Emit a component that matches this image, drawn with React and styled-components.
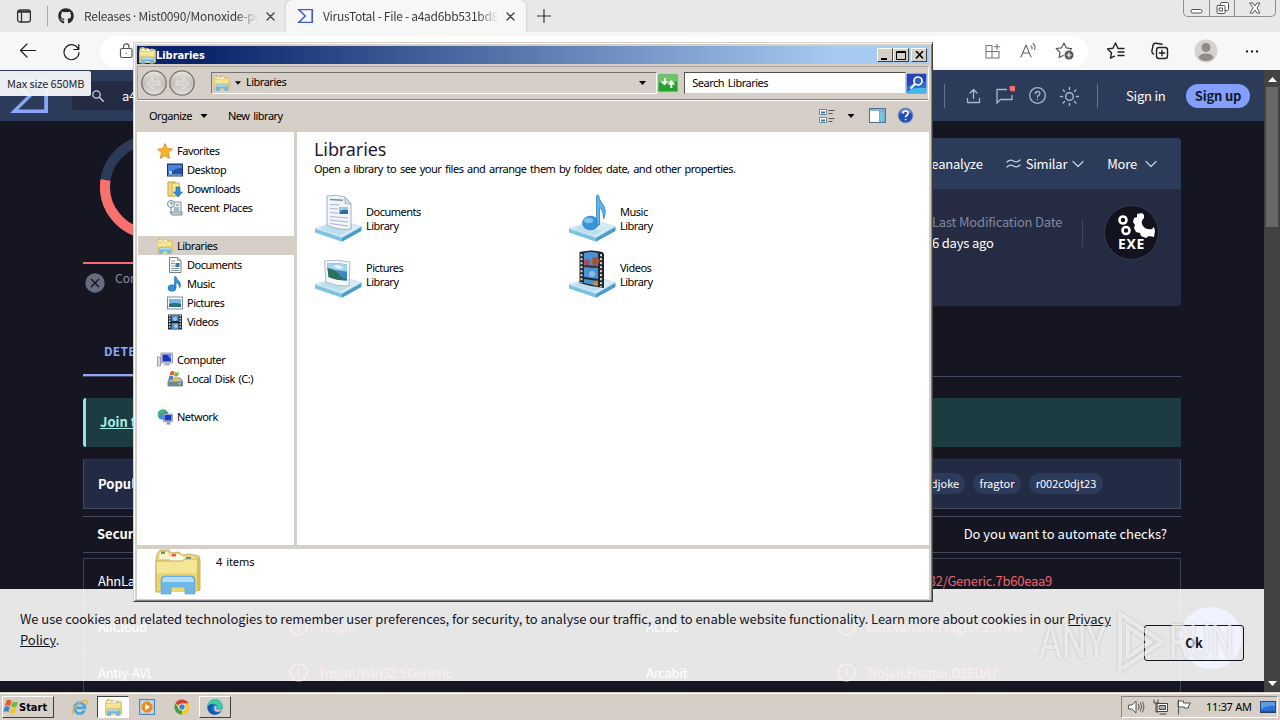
import React from "react";
import styled, { createGlobalStyle, css } from "styled-components";
import { FaGithub } from "react-icons/fa";

const GlobalStyle = createGlobalStyle`
  * {
    box-sizing: border-box;
  }
  body {
    margin: 0;
    overflow: hidden;
    background: #161622;
  }
  svg {
    display: block;
    flex: none;
  }
`;

const pageFont = `"Noto Sans CJK SC", "Noto Sans", sans-serif`;
const winFont = `"Noto Sans", "DejaVu Sans", sans-serif`;
const winBold = `"DejaVu Sans Condensed", "DejaVu Sans", sans-serif`;

const Spacer = styled.div`
  width: ${(p) => p.$w}px;
  flex: none;
`;

/* ---------- desktop ---------- */

const Desktop = styled.div`
  position: relative;
  width: 1280px;
  height: 720px;
  display: flex;
  flex-direction: column;
  overflow: hidden;
  font-family: ${pageFont};
  white-space: nowrap;
`;

/* ---------- browser ---------- */

const TabStrip = styled.div`
  height: 32px;
  flex: none;
  display: flex;
  background: #e8e8e8;
  padding-left: 16px;
`;

const StripIcon = styled.div`
  width: 32px;
  display: flex;
  align-items: center;
  border-right: 1px solid #aaa;
  height: 20px;
  margin-top: 6px;
`;

const Tab = styled.div`
  display: flex;
  align-items: center;
  width: ${(p) => p.$width}px;
  padding: 0 11px 0 ${(p) => (p.$active ? 11 : 10)}px;
  background: ${(p) => (p.$active ? "#f7f7f7" : "transparent")};
  border-radius: 6px 6px 0 0;
  box-shadow: ${(p) => (p.$active ? "0 0 2px rgba(0,0,0,.25)" : "none")};
`;

const TabTitle = styled.span`
  flex: 1;
  margin: 0 8px 0 10px;
  overflow: hidden;
  font-size: 12px;
  line-height: 18px;
  letter-spacing: ${(p) => p.$ls}px;
  color: #3c3c3c;
  -webkit-mask-image: linear-gradient(90deg, #000 88%, transparent);
  mask-image: linear-gradient(90deg, #000 88%, transparent);
`;

/* the CJK face draws the middle dot full width */
const Dot = styled.span`
  font-family: "Noto Sans", sans-serif;
  line-height: 1;
`;

const NewTab = styled.div`
  display: flex;
  align-items: center;
  margin-left: 11px;
`;

const Caption = styled.div`
  display: flex;
  height: 17px;
  margin: 0 4px 0 auto;
  border: 1px solid #8e8e8e;
  border-top: 0;
  border-radius: 0 0 5px 5px;
`;

const CaptionButton = styled.div`
  width: ${(p) => p.$width}px;
  display: flex;
  align-items: center;
  justify-content: center;
  & + & {
    border-left: 1px solid #8e8e8e;
  }
`;

const Toolbar = styled.div`
  height: 38px;
  flex: none;
  display: flex;
  align-items: center;
  background: #f7f7f7;
  padding-left: 18px;
`;

const Omnibox = styled.div`
  width: 988px;
  height: 31px;
  margin: 0 18px 0 19px;
  padding: 0 12px 0 18px;
  display: flex;
  align-items: center;
  border-radius: 16px;
  background: #fff;
`;

const OmniActions = styled.div`
  display: flex;
  margin-left: auto;
  gap: 16px;
`;

const ToolIcons = styled.div`
  display: flex;
  align-items: center;
  gap: 24px;
`;

const Viewport = styled.div`
  flex: 1;
  min-height: 0;
  display: flex;
`;

const Page = styled.div`
  flex: 1;
  background: #161622;
  color: #fff;
  overflow: hidden;
`;

const ScrollTrack = styled.div`
  width: 16px;
  background: #424242;
  display: flex;
  flex-direction: column;
  align-items: center;
  justify-content: space-between;
  padding: 7px 0 6px;
`;

const ScrollThumb = styled.div`
  width: 12px;
  height: 140px;
  margin: 5px 0 auto;
  background: #686868;
`;

const SiteHeader = styled.header`
  height: 51px;
  padding: 0 14px 0 10px;
  display: flex;
  align-items: center;
  background: #2d3b5b;
`;

const SearchField = styled.div`
  width: 700px;
  height: 29px;
  margin: 0 auto 0 24px;
  padding-left: 19px;
  display: flex;
  align-items: center;
  gap: 17px;
  border-radius: 3px;
  background: #242c43;
  font-size: 13px;
`;

const HeaderRule = styled.div`
  width: 1px;
  height: ${(p) => p.$height || 24}px;
  background: ${(p) => p.$color || "#66718e"};
  margin: 0 ${(p) => p.$right}px 0 ${(p) => p.$left}px;
`;

const HeaderIcons = styled.div`
  display: flex;
  gap: 13px;
`;

const SignIn = styled.span`
  width: 39px;
  font-size: 13px;
  letter-spacing: -0.2px;
`;

const SignUp = styled.span`
  width: 64px;
  height: 24px;
  margin-left: 21px;
  line-height: 24px;
  border-radius: 12px;
  background: #839ffb;
  color: #14182c;
  font-size: 13px;
  font-weight: 700;
  letter-spacing: -0.2px;
  text-align: center;
`;

const Content = styled.main`
  width: 1098px;
  margin-left: 83px;
`;

const Summary = styled.div`
  display: flex;
  gap: 12px;
  height: 185px;
  padding-top: 17px;
`;

const ScoreCard = styled.div`
  width: 170px;
  display: flex;
  flex-direction: column;
  padding-left: 17px;
`;

const ScoreFoot = styled.div`
  display: flex;
  align-items: flex-start;
  gap: 10px;
  margin: 20px 0 0 -17px;
  padding: 5px 0 0 2px;
  border-top: 2px solid #f46c75;
  font-size: 12px;
  color: #8b93a9;
  svg {
    margin-top: 4px;
  }
`;

const FileCard = styled.div`
  flex: 1;
  height: 168px;
  border-radius: 4px;
  overflow: hidden;
  background: #242b42;
`;

const FileActions = styled.div`
  height: 51px;
  background: #2d3b5b;
  display: flex;
  align-items: center;
  justify-content: flex-end;
  padding-right: 24px;
  font-size: 13px;
  letter-spacing: -0.2px;
`;

const FileAction = styled.div`
  display: flex;
  align-items: center;
  gap: ${(p) => p.$gap}px;
  margin-left: ${(p) => p.$left}px;
`;

const FileMeta = styled.div`
  display: flex;
  justify-content: flex-end;
  align-items: center;
  padding: 16px 22px 0 0;
`;

const MetaText = styled.div`
  width: 131px;
  padding-bottom: 2px;
  font-size: 13px;
  line-height: 21px;
  letter-spacing: -0.2px;
  div:first-child {
    color: #8088a0;
  }
`;

const Badge = styled.div`
  width: 55px;
  height: 55px;
  border-radius: 50%;
  border: 1px solid #333b54;
  background: #13131f;
  margin-left: 21px;
`;

const Tabs = styled.div`
  height: 71px;
  display: flex;
  align-items: flex-end;
  border-bottom: 1px solid #454a61;
`;

const DetailTab = styled.div`
  width: 112px;
  height: 34px;
  padding-left: 21px;
  font-size: 12px;
  font-weight: 700;
  letter-spacing: 0.3px;
  color: #8fa7fb;
  border-bottom: 2px solid #8fa7fb;
`;

const JoinBanner = styled.div`
  height: 49px;
  margin-top: 21px;
  padding-left: 14px;
  border-left: 3px solid #93e3df;
  border-radius: 3px 0 0 3px;
  background: #1d3c41;
  line-height: 47px;
  font-size: 13px;
  font-weight: 700;
  color: #a5edea;
  text-decoration: underline;
`;

const ThreatBox = styled.div`
  height: 50px;
  margin-top: 12px;
  padding: 0 77px 2px 14px;
  display: flex;
  align-items: center;
  border: 1px solid #444b66;
  border-top-color: #2a3149;
  background: #232b44;
  font-size: 13px;
  font-weight: 700;
`;

const Pills = styled.div`
  display: flex;
  gap: 8px;
  margin-left: auto;
`;

const Pill = styled.span`
  width: ${(p) => p.$width}px;
  height: 21px;
  line-height: 20px;
  border-radius: 11px;
  background: #2c3a5b;
  text-align: center;
  font-size: 11px;
  font-weight: 400;
`;

const AnalysisHead = styled.div`
  height: 37px;
  margin-top: 7px;
  padding: 0 14px 2px;
  display: flex;
  align-items: center;
  justify-content: space-between;
  border: solid #454a61;
  border-width: 1px 0;
  font-size: 13px;
`;

const VendorTable = styled.div`
  margin-top: 5px;
  border: 1px solid #3c4158;
  font-size: 13px;
`;

const VendorRow = styled.div`
  height: 46px;
  display: grid;
  grid-template-columns: 190px 358px 190px 1fr;
  align-items: center;
  padding: 0 0 2px 14px;
  border-bottom: 1px solid #3c4158;
  letter-spacing: -0.25px;
`;

const Verdict = styled.span`
  display: flex;
  align-items: center;
  gap: 10px;
  padding-left: 1px;
  color: #f0646d;
`;

/* ---------- overlays on the page ---------- */

const SizeHint = styled.div`
  position: absolute;
  left: 0;
  top: 71px;
  width: 91px;
  height: 25px;
  padding-left: 7px;
  line-height: 25px;
  font-size: 11px;
  letter-spacing: -0.15px;
  color: #24242c;
  background: rgba(246, 247, 250, 0.95);
  border-radius: 0 2px 2px 0;
`;

const CookieBar = styled.div`
  position: absolute;
  left: 0;
  top: 589px;
  width: 1264px;
  height: 92px;
  padding: 19px 0 0 20px;
  background: rgba(255, 255, 255, 0.895);
  color: #15151f;
  font-size: 13px;
  line-height: 21px;
  letter-spacing: -0.063px;
`;

const OkButton = styled.div`
  position: absolute;
  right: 20px;
  top: 36px;
  width: 100px;
  height: 36px;
  line-height: 34px;
  border: 1px solid #15151f;
  border-radius: 3px;
  text-align: center;
  font-weight: 700;
`;

const ChatBubble = styled.div`
  position: absolute;
  right: 22px;
  top: 18px;
  width: 62px;
  height: 62px;
  border-radius: 50%;
  background: #f1f3fe;
`;

const Watermark = styled.svg`
  position: absolute;
  left: 1034px;
  top: 606px;
  filter: drop-shadow(0 0 1.5px rgba(110, 110, 110, 0.5));
`;

/* ---------- explorer window ---------- */

const Window = styled.section`
  position: absolute;
  left: 133px;
  top: 42px;
  width: 800px;
  height: 560px;
  padding: 2px;
  display: flex;
  flex-direction: column;
  background: #d5cfc7;
  border: 1px solid;
  border-color: #d5cfc7 #404040 #404040 #d5cfc7;
  box-shadow: inset 1px 1px #fff, inset -1px -1px #808080;
  font-family: ${winFont};
  font-size: 11px;
  letter-spacing: -0.5px;
  word-spacing: 1.3px;
  color: #000;
`;

const TitleBar = styled.div`
  height: 18px;
  margin: 1px 1px 0;
  padding: 0 2px 0 2px;
  display: flex;
  align-items: center;
  color: #fff;
  font-family: ${winBold};
  font-weight: 700;
  font-size: 11px;
  letter-spacing: -0.05px;
  background: linear-gradient(90deg, #0a246a 8%, #a6caf0 88%);
`;

const TitleButton = styled.div`
  width: 16px;
  height: 14px;
  margin-left: ${(p) => p.$left || 0};
  display: flex;
  align-items: center;
  justify-content: center;
  background: #d5cfc7;
  border: 1px solid;
  border-color: #fff #404040 #404040 #fff;
`;

const NavBar = styled.div`
  height: 34px;
  margin: 2px 1px 0;
  padding: 0 1px 0 2px;
  display: flex;
  align-items: center;
  border: 1px solid;
  border-color: #aaa49c #fff #87827c #aaa49c;
`;

const inset = css`
  border: 1px solid;
  border-color: #77736e #fff #fff #77736e;
`;

const AddressBox = styled.div`
  width: 447px;
  height: 22px;
  margin-left: 15px;
  padding: 0 10px 0 2px;
  display: flex;
  align-items: center;
  gap: 5px;
  line-height: 16px;
  ${inset}
  > svg:last-child {
    margin-left: auto;
  }
  > span {
    padding-bottom: 2px;
  }
`;

const SearchBox = styled.div`
  width: 222px;
  height: 22px;
  margin-left: 5px;
  padding-left: 7px;
  line-height: 19px;
  background: #fff;
  ${inset}
  border-color: #55514d #ccc #ccc #55514d;
`;

const CommandBar = styled.div`
  height: 32px;
  margin: 0 1px;
  padding: 0 15px 2px 12px;
  display: flex;
  align-items: center;
  border-top: 1px solid #fff;
`;

const Command = styled.div`
  display: flex;
  align-items: center;
  gap: 8px;
  margin-right: ${(p) => p.$right};
`;

const Body = styled.div`
  flex: 1;
  display: flex;
  margin: 0 1px;
`;

const NavPane = styled.nav`
  width: 157px;
  padding: 9px 0 0 1px;
  background: #fff;
`;

const NavGroup = styled.div`
  margin-bottom: 19px;
`;

const NavItem = styled.div`
  height: 19px;
  display: flex;
  align-items: center;
  gap: 4px;
  padding-left: ${(p) => (p.$child ? 29 : 19)}px;
  background: ${(p) => (p.$selected ? "#d5cfc7" : "transparent")};
`;

const Main = styled.div`
  flex: 1;
  margin-left: 3px;
  padding: 5px 0 0 17px;
  background: #fff;
`;

const Heading = styled.h1`
  margin: 0;
  font-size: 18px;
  line-height: 25px;
  font-weight: 400;
  letter-spacing: -0.1px;
  color: #1c1c3a;
`;

const Hint = styled.p`
  margin: 0 0 18px;
  line-height: 14px;
`;

const LibraryGrid = styled.div`
  display: grid;
  grid-template-columns: 254px 254px;
  grid-auto-rows: 56px;
`;

const Library = styled.div`
  display: flex;
  gap: 4px;
  line-height: 14px;
  div {
    padding-top: 11px;
  }
`;

const DetailsPane = styled.footer`
  height: 50px;
  margin: 4px 1px 0;
  padding-left: 18px;
  display: flex;
  gap: 15px;
  background: #fff;
  span {
    padding-top: 5px;
    letter-spacing: -0.1px;
  }
`;

/* ---------- taskbar ---------- */

const Taskbar = styled.div`
  position: relative;
  height: 28px;
  flex: none;
  padding: 3px 2px 2px;
  display: flex;
  align-items: center;
  background: #d5cfc7;
  border-top: 1px solid #d5cfc7;
  box-shadow: inset 0 1px #fff;
  font-family: ${winFont};
  font-size: 11px;
  letter-spacing: -0.3px;
`;

const StartButton = styled.div`
  width: 52px;
  height: 22px;
  margin-right: 15px;
  padding-left: 0;
  display: flex;
  align-items: center;
  font-family: ${winBold};
  font-weight: 700;
  letter-spacing: 0;
  border: 1px solid;
  border-color: #fff #404040 #404040 #fff;
`;

const TaskButton = styled.div`
  width: ${(p) => p.$width}px;
  height: 22px;
  margin-right: ${(p) => p.$right || 0}px;
  display: flex;
  align-items: center;
  justify-content: center;
  border: 1px solid transparent;
  ${(p) => p.$state === "pressed" && "background: #fdfdfc; border-color: #404040 #fff #fff #404040;"}
  ${(p) => p.$state === "open" && "border-color: #fff #404040 #404040 #fff;"}
`;

const Tray = styled.div`
  width: 157px;
  height: 22px;
  margin-left: auto;
  padding: 0 1px 0 6px;
  display: flex;
  align-items: center;
  gap: 7px;
  border: 1px solid;
  border-color: #8a857f #fff #fff #8a857f;
  span {
    flex: 1;
    padding: 0 0 1px 6px;
  }
`;

/* ---------- icons ---------- */

const Line = ({ w = 16, h = w, box, color = "#333", sw = 1.2, children }) => (
  <svg
    width={w}
    height={h}
    viewBox={box || `0 0 ${w} ${h}`}
    fill="none"
    stroke={color}
    strokeWidth={sw}
    strokeLinecap="round"
    strokeLinejoin="round"
  >
    {children}
  </svg>
);

const CloseX = () => (
  <Line w={9} sw={1.4} color="#444">
    <path d="M1 1l7 7M8 1L1 8" />
  </Line>
);

const Down = ({ color = "#000", w = 7 }) => (
  <svg width={w} height={4} viewBox="0 0 7 4">
    <path d="M0 0h7L3.5 4z" fill={color} />
  </svg>
);

const VtLogo = ({ size, color }) => (
  <svg width={size} height={size} viewBox="0 0 24 24">
    <path
      fill={color}
      fillRule="evenodd"
      d="M10.87 12L0 22.68h24V1.32H0zm10.73 8.52H5.28l8.64-8.45L5.28 3.48H21.6z"
    />
  </svg>
);

const FolderIcon = ({ size = 16 }) => (
  <svg width={size} height={size} viewBox="0 0 46 46">
    <path d="M2 5l3-4h9l2 3 8-1 3 3 8-1 9 2 1 4v30H1V11z" fill="#ecd37b" stroke="#c2a54f" strokeWidth=".8" />
    <path d="M5 3h8l3 7H4z" fill="#f8f3cd" />
    <path d="M15 8l9-3 6 4v4H15z" fill="#fdfaf0" />
    <path d="M29 8h9l5 3v4H30z" fill="#f7efc2" />
    <rect x="6" y="2.500" width="4" height="2.500" fill="#57a05a" />
    <rect x="17" y="5" width="4" height="2.500" fill="#d0654f" />
    <rect x="31" y="8" width="5" height="2.500" fill="#3f87c9" />
    <path d="M41 12l4-2v32h-4z" fill="#dcbb55" />
    <path d="M1 12h26l3-2h12v33H1z" fill="#ecd670" />
    <path d="M1 12h26l3-2h12v14H1z" fill="#f8eca4" opacity=".7" />
    <path d="M1 12v31h4M1 12h26l3-2h15" fill="none" stroke="#c2a54f" strokeWidth=".9" />
    <path d="M6 45V31q0-4 4-4h26q4 0 4 4v14H30v-7H16v7z" fill="#6fb7e6" stroke="#5ba3d6" strokeWidth=".7" />
    <path d="M7 33q0-5 4-5h24q4 0 4 5z" fill="#b5dcf3" />
  </svg>
);

const Tray3D = () => (
  <g>
    <path d="M1 34.500L28 43.500v4.300L1 38.500z" fill="#7cc2e3" />
    <path d="M47.500 32.500L28 43.500v4.300L47.500 37z" fill="#4a9dc9" />
    <path d="M1 34.500L26.500 26.500l21 6-19.500 11z" fill="#d5eaf4" stroke="#add4e6" strokeWidth=".5" />
    <path d="M6 35l20 6.500 8-4.500-22-5z" fill="#bcdfef" />
  </g>
);

const LibraryIcon = ({ kind }) => (
  <svg width="48" height="48" viewBox="0 0 48 48">
    <Tray3D />
    {kind === "documents" && (
      <g>
        <path d="M13 2q9-2 18 1l6 7v25q-12 2-24-4z" fill="#f1f4fa" stroke="#8fa0b5" strokeWidth=".8" />
        <path d="M31 3v6.500l6 .5z" fill="#d5e0eb" stroke="#8fa0b5" strokeWidth=".7" />
        <path d="M16 5.500l13 .8" stroke="#57a08e" strokeWidth="1.400" />
        <path
          d="M16 10.500l9 .5M16 14.500l8 .5M16 18.500l8 .8M16 22.500l18 1.500M16 26l18 2M16 29.500l18 2.500"
          stroke="#a9a7cc"
          strokeWidth=".9"
        />
        <path d="M25.500 13h8.500v7h-8.500z" fill="#2f6f9f" />
        <path d="M25.500 13h8.500v3q-4-1-8.500 1z" fill="#9bcbea" />
      </g>
    )}
    {kind === "pictures" && (
      <g>
        <path d="M10.500 11q13-2 25.500 1l-1 24q-12 1-23-4z" fill="#f7fafc" stroke="#9aaab8" strokeWidth=".8" />
        <path d="M13 13.500q10-1 20 1v16q-10 0-18.500-3.500z" fill="#3f86c4" />
        <path d="M13 13.500q10-1 20 1v7L14 19z" fill="#a5d2ef" />
        <path d="M13.500 18q7 1 11 6t8.500 5v1.500q-10 0-18.500-3.500z" fill="#2f7058" />
        <path d="M19 16l5-1 6 3-5 1z" fill="#eef8fc" />
      </g>
    )}
    {kind === "music" && (
      <g>
        <ellipse cx="22.500" cy="29" rx="8" ry="6.800" fill="#3795d8" stroke="#2577b5" strokeWidth=".7" />
        <path
          d="M28.500 30V1.500q1.500-1 2 0 1 5 4 8.500 5 6 1 15 0-9-4-11.500V31z"
          fill="#58b3ea"
          stroke="#2577b5"
          strokeWidth=".7"
        />
        <ellipse cx="20.500" cy="26.500" rx="4.500" ry="2.800" fill="#7cc6f1" />
      </g>
    )}
    {kind === "videos" && (
      <g>
        <path d="M11.500 2q12-3 23 0l1.500 2v34q-12-1-24.500-5z" fill="#23262b" />
        <path d="M16 3q7-2 14 0v13l-14-1zM16 17l14 1v11l-14-2zM16 29l14 2v5l-14-3z" fill="#4894d4" />
        <circle cx="19" cy="12" r="3" fill="#b8435c" />
        <circle cx="27.500" cy="11" r="4" fill="#9d5639" />
        <path d="M16 15l14 1v2l-14-1z" fill="#53352d" />
        <circle cx="24" cy="24" r="3" fill="#87bce8" />
        <path d="M25 33l4-3 1 6-5-1z" fill="#c98a39" />
        <path d="M13.500 4v29M33 4v33" stroke="#c3ccd2" strokeWidth="2" strokeDasharray="2.200 1.800" />
      </g>
    )}
  </svg>
);

const smallIcons = {
  star: (
    <path
      d="M8 .5l2.300 5 5.200.6-3.900 3.700 1.100 5.700L8 12.700l-4.700 2.800 1.100-5.700L.5 6.100l5.200-.6z"
      fill="#f9b42e"
      stroke="#d07c17"
      strokeWidth=".7"
    />
  ),
  desktop: (
    <g>
      <rect x=".5" y="2" width="15" height="12" fill="#2450a4" stroke="#18366d" />
      <path d="M1 3h14v3Q8 6 1 11z" fill="#4a86d8" />
      <path d="M1 13h14" stroke="#a9c2e8" />
      <rect x="2" y="9" width="3" height="3" fill="#9cd0f5" />
    </g>
  ),
  downloads: (
    <g>
      <path d="M1 1h7v14H1z" fill="#f4d97b" stroke="#c5a141" />
      <path d="M5 2h7v13H5z" fill="#f8e69b" stroke="#cfae52" />
      <path d="M9 6h4v5h2.500L11 16 6.500 11H9z" fill="#2d8ddb" stroke="#1764a5" strokeWidth=".6" />
    </g>
  ),
  recent: (
    <g>
      <path d="M4 2h10v12H4z" fill="#f0f3f5" stroke="#818c94" />
      <path d="M3 12h12v3H5z" fill="#c8cfd4" stroke="#818c94" />
      <circle cx="4" cy="4" r="3.500" fill="#e8f1f7" stroke="#778b99" />
      <path d="M4 2v2h2M9 5h3M7 8h5M7 10h5" stroke="#587d97" fill="none" />
    </g>
  ),
  doc: (
    <g>
      <path d="M2.500.5h8l3.500 3v12H2.500z" fill="#fff" stroke="#73808c" />
      <path d="M10.500.5v3H14M4 4h4M4 6.500h4M4 9h4M4 11.500h8M4 13.500h8" stroke="#8b98a8" fill="none" />
      <rect x="8.500" y="6" width="4" height="4" fill="#3a74a9" />
    </g>
  ),
  note: (
    <g fill="#2e93db" stroke="#1b6aad" strokeWidth=".6">
      <ellipse cx="5" cy="12" rx="4" ry="3.200" />
      <path d="M7.500 12V.7h1.500q.5 3 3 4.500 3 3 .5 7Q13 8 9 6.500V12z" />
    </g>
  ),
  picture: (
    <g>
      <rect x=".5" y="2" width="15" height="12" fill="#fff" stroke="#7b8b97" />
      <rect x="2" y="4" width="12" height="8" fill="#79b9df" />
      <path d="M2 9q5-2 12 0v3H2z" fill="#276e83" />
    </g>
  ),
  film: (
    <g>
      <rect x="1" y=".5" width="14" height="15" fill="#22262c" />
      <path d="M4.500 1h7v6h-7zM4.500 9h7v6h-7z" fill="#4c90cb" />
      <circle cx="8" cy="5" r="2" fill="#99c4e5" />
      <circle cx="9" cy="12" r="2" fill="#a8c8dd" />
      <path d="M2.700 1v14M13.300 1v14" stroke="#dde5ea" strokeWidth="1.500" strokeDasharray="1.500 1.300" />
    </g>
  ),
  computer: (
    <g>
      <rect x="4" y="1" width="11.500" height="10" fill="#cfd5dc" stroke="#7b8794" strokeWidth=".7" />
      <rect x="5.500" y="2.500" width="8.500" height="7" fill="#1e33c4" />
      <path d="M10 2.500h4v5z" fill="#6f8af0" />
      <path d="M8 11h4l1 2.500H7z" fill="#a9b2bb" />
      <rect x=".5" y="5" width="3" height="9" fill="#d8dcdf" stroke="#7b8794" strokeWidth=".7" />
    </g>
  ),
  disk: (
    <g>
      <path d="M1 10l3-3h9l2.500 3v5H1z" fill="#b8c0c6" stroke="#59646d" strokeWidth=".7" />
      <path d="M1 10.500h14.500V15H1z" fill="#6c8893" />
      <rect x="11" y="12" width="3" height="1.500" fill="#7de06b" />
      <path d="M3.500.8q2-1.500 4 0L6.500 4.500q-2-1-4 .3z" fill="#e4572e" />
      <path d="M8 1q2 1 4 0l-1 4q-2 1-4 0z" fill="#6fb73c" />
      <path d="M2.300 5.300q2-1 4 0L5.300 9.300q-2-1-4 0z" fill="#3c83d8" />
      <path d="M6.800 5.700q2 1 4 0L9.800 9.700q-2 1-4 0z" fill="#f2c12f" />
    </g>
  ),
  network: (
    <g>
      <circle cx="6" cy="5.500" r="5.300" fill="#3d93cf" />
      <path d="M2 3q3-3 6-2 0 3-3 4T2 8Q0 6 2 3zM6 7q4-1 4 1L8 10.500z" fill="#57b35b" />
      <rect x="6.500" y="5" width="9" height="7.500" fill="#c8d1dc" stroke="#69788a" strokeWidth=".6" />
      <rect x="7.500" y="6" width="7" height="5.500" fill="#1d36cc" />
      <path d="M10 13h3l1 2.500H9z" fill="#8d9aa8" />
    </g>
  ),
};

const SmallIcon = ({ name }) => (
  <svg width="16" height="16" viewBox="0 0 16 16">
    {smallIcons[name]}
  </svg>
);

const Warn = () => (
  <Line w={19} color="#f0646d" sw={1.5}>
    <circle cx="9.500" cy="9.500" r="8.500" />
    <path d="M9.500 5v5.500M9.500 13.200v.2" />
  </Line>
);

const RoundArrow = ({ flip }) => (
  <svg width="28" height="28" viewBox="0 0 28 28">
    <defs>
      <linearGradient id="disc" x1="0" y1="0" x2="0" y2="1">
        <stop offset="0" stopColor="#e6e3df" />
        <stop offset=".5" stopColor="#c3beb7" />
        <stop offset="1" stopColor="#e3e0dc" />
      </linearGradient>
    </defs>
    <circle cx="14" cy="14" r="12.200" fill="url(#disc)" stroke="#77736f" strokeWidth="1.300" />
    <path
      transform={flip ? "matrix(-1 0 0 1 28 0)" : undefined}
      d="M7 14l6-6v4h7v4h-7v4z"
      fill="#d5d1cb"
      stroke="#e4e1dd"
    />
  </svg>
);

const WinFlag = () => (
  <svg width="16" height="16" viewBox="0 0 16 16">
    <path d="M3.500 1.500Q6 0 8.500 2L7 7Q4.500 5.500 2 7z" fill="#e8562a" />
    <path d="M9.500 2.500Q12 4 15 2.500L13.500 7.500Q11 9 8 7.500z" fill="#76b83f" />
    <path d="M1.800 8Q4 6.500 6.800 8L5.300 13Q3 11.500.3 13z" fill="#3a7fd5" />
    <path d="M7.700 8.500Q10 10 13.200 8.500L11.700 13.500Q9 15 6.200 13.500z" fill="#f4c22c" />
  </svg>
);

const IeIcon = () => (
  <svg width="17" height="17" viewBox="0 0 17 17" fill="none">
    <path d="M13.500 11.500A5.300 5.300 0 1 1 14 8.800H5" stroke="#4aa5df" strokeWidth="2.800" />
    <path d="M2 15Q-.5 13 5 7T15.500 1.500Q17 3 14.500 6" stroke="#e5b537" strokeWidth="1.300" />
  </svg>
);

const MediaIcon = () => (
  <svg width="16" height="16" viewBox="0 0 16 16">
    <rect x=".5" y=".5" width="15" height="15" fill="#a9cdec" stroke="#4f86b9" />
    <rect x="2.500" y="2.500" width="11" height="11" fill="#dceaf6" />
    <circle cx="8" cy="8" r="5.700" fill="#f08a1c" />
    <path d="M6.300 4.800v6.400L11 8z" fill="#fff" />
  </svg>
);

const ChromeIcon = () => (
  <svg width="16" height="16" viewBox="0 0 16 16">
    <circle cx="8" cy="8" r="7.500" fill="#f7c92e" />
    <path d="M8 8L1.500 4.200A7.500 7.500 0 0 1 14.500 4.200H8z" fill="#dc3f31" />
    <path d="M8 8v7.500A7.500 7.500 0 0 1 1.500 4.200L4.800 10z" fill="#3aa04e" />
    <circle cx="8" cy="8" r="3.600" fill="#fff" />
    <circle cx="8" cy="8" r="2.800" fill="#3d7de0" />
  </svg>
);

const EdgeIcon = () => (
  <svg width="16" height="16" viewBox="0 0 16 16">
    <circle cx="8" cy="8" r="7.700" fill="#1a78cf" />
    <path d="M.4 8Q1 .3 8.300.3 15.500.8 15.700 7q-.5 3.500-4.500 3.500-2-.2-1.200-1.500 1-3-2.500-4T.4 8z" fill="#41cba2" />
    <path d="M.4 8Q2 4.500 6.500 5 3.500 8 5.500 11.500T13 13Q10 16.500 5.500 15.300T.4 8z" fill="#1358a9" />
    <path d="M9.500 9q-.8 1.500 1.700 1.700 2.500.2 4-1.200l-1 2.600Q9 14 7.500 11 6.500 8 8.500 6.800 10 7.500 9.500 9z" fill="#d5cfc7" />
  </svg>
);

/* ---------- data ---------- */

const navGroups = [
  [
    { icon: "star", label: "Favorites" },
    { icon: "desktop", label: "Desktop", child: true },
    { icon: "downloads", label: "Downloads", child: true },
    { icon: "recent", label: "Recent Places", child: true },
  ],
  [
    { icon: "folder", label: "Libraries", selected: true },
    { icon: "doc", label: "Documents", child: true },
    { icon: "note", label: "Music", child: true },
    { icon: "picture", label: "Pictures", child: true },
    { icon: "film", label: "Videos", child: true },
  ],
  [
    { icon: "computer", label: "Computer" },
    { icon: "disk", label: "Local Disk (C:)", child: true },
  ],
  [{ icon: "network", label: "Network" }],
];

const libraries = ["Documents", "Music", "Pictures", "Videos"];

const vendors = [
  ["AhnLab-V3", "Trojan/Win32", "Alibaba", "Trojan:Win32/Generic.7b60eaa9"],
  ["AliCloud", "Trojan", "ALYac", "Gen:Variant.Fragtor.257447"],
  ["Antiy-AVL", "Trojan/Win32.SGeneric", "Arcabit", "Trojan.Fragtor.D3EDA7"],
];

/* ---------- sections ---------- */

const BrowserChrome = () => (
  <>
    <TabStrip>
      <StripIcon>
        <Line w={16} sw={1.3} color="#333">
          <rect x="1.600" y="2" width="12.800" height="12" rx="2.500" />
          <path d="M2 3.800h12" strokeWidth="2" />
          <path d="M5.500 5v9" />
        </Line>
      </StripIcon>
      <Tab $width={238}>
        <FaGithub size={16} color="#24292f" />
        <TabTitle $ls={-0.25}>
          Releases <Dot>·</Dot> Mist0090/Monoxide-pe
        </TabTitle>
        <CloseX />
      </Tab>
      <Tab $active $width={240}>
        <VtLogo size={16} color="#3f5bd9" />
        <TabTitle $ls={-0.3}>VirusTotal - File - a4ad6bb531bd8</TabTitle>
        <CloseX />
      </Tab>
      <NewTab>
        <Line w={14} sw={1.2} color="#333">
          <path d="M7 .5v13M.5 7h13" />
        </Line>
      </NewTab>
      <Caption>
        <CaptionButton $width={25}>
          <Line w={13} h={14} sw={1} color="#555">
            <rect x="1" y="8.500" width="11" height="3.500" rx="1.500" fill="#fff" />
          </Line>
        </CaptionButton>
        <CaptionButton $width={25}>
          <Line w={13} h={14} sw={1} color="#555">
            <rect x="4.500" y="1.500" width="8" height="8" rx="1" fill="#fff" />
            <rect x="1" y="4.500" width="8" height="8" rx="1" fill="#fff" />
            <rect x="3.500" y="7" width="3" height="3" />
          </Line>
        </CaptionButton>
        <CaptionButton $width={41}>
          <Line w={12} h={12} sw={1} color="#555">
            <path d="M1 1h3l2 3 2-3h3L8 6l3 5H8L6 8l-2 3H1l3-5z" fill="#fff" />
          </Line>
        </CaptionButton>
      </Caption>
    </TabStrip>
    <Toolbar>
      <Line w={19} h={18} color="#1c1c1c" sw={1.2}>
        <path d="M17.500 8.500H2.500M9 2L2.500 8.500 9 15" />
      </Line>
      <Spacer $w={25} />
      <Line w={19} color="#1c1c1c" sw={1.2}>
        <path d="M16.500 7.500A7.500 7.500 0 1 0 17 10.500M16.800 2.500v5h-5" />
      </Line>
      <Omnibox>
        <Line w={16} color="#555" sw={1.2}>
          <rect x="2.500" y="5.500" width="11.500" height="9" rx="1.500" />
          <path d="M5.500 5.500v-2a2.700 2.700 0 0 1 5.400 0v2M8.200 10v.2" />
        </Line>
        <OmniActions>
          <Line w={20} color="#777" sw={1.1}>
            <path d="M4 4.500h6V17H4zM4 10.500h13V17H10M15 3v5.500M12.200 5.800h5.600" />
          </Line>
          <Line w={20} color="#666" sw={1.1}>
            <path d="M3 16L8 4l5 12M4.800 12h6.500M13 5q1.500 1 1 3M15 2.500q3 2.500 1.500 6" />
          </Line>
          <Line w={22} h={20} color="#555" sw={1.2}>
            <path d="M15.500 7.300l-3.300-.5L10 2 7.600 6.800l-5.400.7L6 11.300 5.200 16.500l4-2M15.500 7.300l2 .3-1 1.400" />
            <circle cx="15" cy="14" r="4.500" fill="#555" stroke="none" />
            <path d="M15 11.800v4.400M12.800 14h4.400" stroke="#fff" />
          </Line>
        </OmniActions>
      </Omnibox>
      <ToolIcons>
        <Line w={20} color="#222" sw={1.4}>
          <path d="M12 7.500L9.500 2 7 7.200l-5.500.7 4 3.800-1 5.500 4-2M12 7.500h6M12 11h6M12 14.500h6" />
        </Line>
        <Line w={20} color="#222" sw={1.4}>
          <rect x="6.500" y="6.500" width="11" height="11" rx="2.500" />
          <path d="M12 9.300v5.400M9.300 12h5.400M3.500 13Q1.500 12 2 9.500l1-5Q3.500 2 6 2.300l6 1" />
        </Line>
        <svg width="24" height="24" viewBox="0 0 24 24">
          <circle cx="12" cy="12" r="11.500" fill="#d6d3cf" />
          <circle cx="12" cy="8.500" r="4.500" fill="#8f8b87" />
          <path d="M4.500 18.500Q6 14.500 12 14.500t7.500 4Q17 22 12 22t-7.500-3.500z" fill="#8f8b87" />
        </svg>
        <Line w={20} h={16} color="#222" sw={2.3}>
          <path d="M5 8.500h.1M10 8.500h.1M15 8.500h.1" />
        </Line>
      </ToolIcons>
    </Toolbar>
  </>
);

const Header = () => (
  <SiteHeader>
    <VtLogo size={38} color="#8aa6fa" />
    <SearchField>
      <Line w={14} color="#c9d1e6" sw={1.3}>
        <circle cx="5.500" cy="5.500" r="3.700" />
        <path d="M8.300 8.300l4 4" />
      </Line>
      a4ad6bb531bd
    </SearchField>
    <HeaderRule $left={0} $right={19} />
    <HeaderIcons>
      <Line w={18} color="#a9b5d3" sw={1.3}>
        <path d="M9.500 12.500V4M6 7l3.500-3.500L13 7M3.500 12.500v4h12v-4" />
      </Line>
      <svg width="20" height="20" viewBox="0 0 20 20" fill="none">
        <path d="M12 3.500H2V17l3.500-3.500H17V9" stroke="#a9b5d3" strokeWidth="1.300" />
        <circle cx="18" cy="2" r="3.500" fill="#f46c75" />
      </svg>
      <Line w={18} color="#a9b5d3" sw={1.3}>
        <circle cx="9.500" cy="9.500" r="7.800" />
        <path d="M7.300 7.800Q7.500 5.500 9.700 5.500t2.200 2q0 1.200-1.300 1.900T9.500 11M9.500 13.400v.1" />
      </Line>
      <Line w={20} color="#a9b5d3" sw={1.4}>
        <circle cx="10.500" cy="10.500" r="3.800" />
        <path d="M10.500 1.500v2M10.500 17.500v2M1.500 10.500h2M17.500 10.500h2M4.100 4.100l1.400 1.400M15.500 15.500l1.400 1.400M4.100 16.900l1.400-1.400M15.500 5.500l1.400-1.400" />
      </Line>
    </HeaderIcons>
    <HeaderRule $left={18} $right={28} />
    <SignIn>Sign in</SignIn>
    <SignUp>Sign up</SignUp>
  </SiteHeader>
);

const ChevronDown = () => (
  <Line w={12} h={8} color="#c3cde6" sw={1.2}>
    <path d="M1 1.500l5 5 5-5" />
  </Line>
);

const VirusTotalPage = () => (
  <Viewport>
    <Page>
      <Header />
      <Content>
        <Summary>
          <ScoreCard>
            <svg width="104" height="104" viewBox="0 0 104 104" fill="none" strokeWidth="10">
              <circle cx="52" cy="49" r="47" stroke="#2d3b5b" />
              <path d="M5.500 42A47 47 0 1 0 99 49" stroke="#f9706f" />
            </svg>
            <ScoreFoot>
              <svg width="20" height="20" viewBox="0 0 20 20">
                <circle cx="10" cy="10" r="9.700" fill="#666d80" />
                <path d="M6 6l8 8M14 6l-8 8" stroke="#161622" strokeWidth="1.500" />
              </svg>
              Community Score
            </ScoreFoot>
          </ScoreCard>
          <FileCard>
            <FileActions>
              <FileAction $left={0}>Reanalyze</FileAction>
              <FileAction $left={23} $gap={5}>
                <Line w={15} h={12} color="#c3cde6" sw={1.2}>
                  <path d="M1 4q3-3 6.500-1T14 2M1 9q3-3 6.500-1T14 7" />
                </Line>
                Similar
                <ChevronDown />
              </FileAction>
              <FileAction $left={23} $gap={8}>
                More
                <ChevronDown />
              </FileAction>
            </FileActions>
            <FileMeta>
              <MetaText>
                <div>Last Modification Date</div>
                <div>6 days ago</div>
              </MetaText>
              <HeaderRule $left={19} $right={0} $height={28} $color="#3c4762" />
              <Badge>
                <svg width="53" height="53" viewBox="0 0 53 53">
                  <g fill="none" stroke="#fff" strokeWidth="2.600">
                    <circle cx="18" cy="14" r="3.500" />
                    <circle cx="21" cy="24.500" r="3.500" />
                  </g>
                  <path
                    d="M32 8l5-1 2 2v3q-4 4-1 8t9 3l2-2 1 4-1 6-5-1-3 2-5-2-1-3-4-1-2-4 1-3-2-3 1-4 3-1z"
                    fill="#fff"
                  />
                  <text x="13" y="43" fill="#fff" fontSize="14" fontWeight="700" fontFamily="Noto Sans" letterSpacing="0.6">
                    EXE
                  </text>
                </svg>
              </Badge>
            </FileMeta>
          </FileCard>
        </Summary>
        <Tabs>
          <DetailTab>DETECTION</DetailTab>
        </Tabs>
        <JoinBanner>Join the community</JoinBanner>
        <ThreatBox>
          Popular threat label
          <Pills>
            <Pill $width={53}>badjoke</Pill>
            <Pill $width={48}>fragtor</Pill>
            <Pill $width={74}>r002c0djt23</Pill>
          </Pills>
        </ThreatBox>
        <AnalysisHead>
          <b>Security vendors' analysis</b>
          <span>Do you want to automate checks?</span>
        </AnalysisHead>
        <VendorTable>
          {vendors.map(([a, av, b, bv]) => (
            <VendorRow key={a}>
              <span>{a}</span>
              <Verdict>
                <Warn />
                {av}
              </Verdict>
              <span>{b}</span>
              <Verdict>
                <Warn />
                {bv}
              </Verdict>
            </VendorRow>
          ))}
        </VendorTable>
      </Content>
    </Page>
    <ScrollTrack>
      <svg width="9" height="5" viewBox="0 0 9 5">
        <path d="M0 5L4.500 0 9 5z" fill="#fff" />
      </svg>
      <ScrollThumb />
      <svg width="9" height="5" viewBox="0 0 9 5">
        <path d="M0 0h9L4.500 5z" fill="#fff" />
      </svg>
    </ScrollTrack>
  </Viewport>
);

const ExplorerWindow = () => (
  <Window>
    <TitleBar>
      <FolderIcon size={17} />
      Libraries
      <TitleButton $left="auto">
        <svg width="10" height="9" viewBox="0 0 10 9">
          <path d="M1 7h6v2H1z" />
        </svg>
      </TitleButton>
      <TitleButton>
        <svg width="10" height="9" viewBox="0 0 10 9">
          <path d="M.5.500h9v8h-9zM0 1.500h9" fill="none" stroke="#000" />
        </svg>
      </TitleButton>
      <TitleButton $left="2px">
        <svg width="9" height="8" viewBox="0 0 9 8">
          <path d="M1 0l7 7.500M8 0L1 7.500" stroke="#000" strokeWidth="1.600" />
        </svg>
      </TitleButton>
    </TitleBar>
    <NavBar>
      <RoundArrow />
      <RoundArrow flip />
      <AddressBox>
        <FolderIcon size={16} />
        <Down w={6} />
        <span>Libraries</span>
        <Down />
      </AddressBox>
      <svg width="22" height="20" viewBox="0 0 22 20">
        <rect x="1" y="1" width="20" height="18" rx="1.500" fill="#279f2d" stroke="#b9d3b4" />
        <path d="M2 2h18v6Q10 12 2 9z" fill="#6fc468" />
        <path d="M7 5h2v3h2.500L7.500 12.500 3.500 8.500H7zM13.300 15h2v-3.500h3l-4-4.500-3.800 4.500h2.800z" fill="#fff" />
      </svg>
      <SearchBox>Search Libraries</SearchBox>
      <svg width="21" height="21" viewBox="0 0 21 21">
        <rect x=".5" y=".5" width="20" height="20" rx="1.500" fill="#2b6cd0" stroke="#8aa9d8" />
        <path d="M1 1h19v7Q10 8 1 13z" fill="#2a41b8" />
        <path d="M1 20q2-6 19-5v5z" fill="#42b9e6" />
        <circle cx="12" cy="8" r="4" fill="#2f62c9" stroke="#fff" strokeWidth="1.700" />
        <path d="M9 11l-4.500 4.500" stroke="#fff" strokeWidth="2.200" />
      </svg>
    </NavBar>
    <CommandBar>
      <Command $right="20px">
        Organize <Down w={8} />
      </Command>
      <Command $right="auto">New library</Command>
      <svg width="17" height="16" viewBox="0 0 17 16">
        <path d="M1.500 1.500h7v5h-7zM1.500 9.500h7v5h-7z" fill="#fff" stroke="#6d8aa6" />
        <path d="M3 3.500h4v2H3zM3 11.500h4v2H3z" fill="#3c76a6" />
        <path d="M10.500 2.500h6M10.500 5.500h4M10.500 10.500h6M10.500 13.500h4" stroke="#555" />
      </svg>
      <Spacer $w={12} />
      <Down w={8} />
      <Spacer $w={14} />
      <svg width="17" height="15" viewBox="0 0 17 15">
        <rect x=".5" y=".5" width="16" height="14" fill="#fff" stroke="#4d6f94" />
        <path d="M1 1h15v2H1z" fill="#8fb3d3" />
        <path d="M10.500 3H16v11h-5.500z" fill="#7cc0e2" stroke="#4d8ab0" strokeWidth=".6" />
      </svg>
      <Spacer $w={11} />
      <svg width="17" height="17" viewBox="0 0 17 17">
        <circle cx="8.500" cy="8.500" r="7.500" fill="#264fb5" stroke="#8d9dc0" />
        <path d="M2 7q6-5 13 0-2-5-6.500-5T2 7z" fill="#6c8fe0" />
        <path
          d="M6 6.500Q6 4 8.600 4T11 6.300q0 1.200-1.200 2T8.600 10.300M8.600 12v1.200"
          fill="none"
          stroke="#fff"
          strokeWidth="1.700"
        />
      </svg>
    </CommandBar>
    <Body>
      <NavPane>
        {navGroups.map((group) => (
          <NavGroup key={group[0].label}>
            {group.map((item) => (
              <NavItem key={item.label} $child={item.child} $selected={item.selected}>
                {item.icon === "folder" ? <FolderIcon /> : <SmallIcon name={item.icon} />}
                {item.label}
              </NavItem>
            ))}
          </NavGroup>
        ))}
      </NavPane>
      <Main>
        <Heading>Libraries</Heading>
        <Hint>Open a library to see your files and arrange them by folder, date, and other properties.</Hint>
        <LibraryGrid>
          {libraries.map((name) => (
            <Library key={name}>
              <LibraryIcon kind={name.toLowerCase()} />
              <div>
                {name}
                <br />
                Library
              </div>
            </Library>
          ))}
        </LibraryGrid>
      </Main>
    </Body>
    <DetailsPane>
      <FolderIcon size={46} />
      <span>4 items</span>
    </DetailsPane>
  </Window>
);

const App = () => (
  <Desktop>
    <GlobalStyle />
    <BrowserChrome />
    <VirusTotalPage />
    <CookieBar>
      We use cookies and related technologies to remember user preferences, for security, to analyse our traffic, and
      to enable website functionality. Learn more about cookies in our <u>Privacy</u>
      <br />
      <u>Policy</u>.
      <ChatBubble />
      <OkButton>Ok</OkButton>
    </CookieBar>
    <SizeHint>Max size 650MB</SizeHint>
    <Watermark width="210" height="72" viewBox="0 0 210 72">
      <g fill="#fff" fillOpacity=".6" fontFamily="Roboto, sans-serif" fontSize="48" fontWeight="400">
        <text x="5" y="52" textLength="68" lengthAdjust="spacingAndGlyphs">
          ANY
        </text>
        <text x="135" y="52" textLength="65" lengthAdjust="spacingAndGlyphs">
          RUN
        </text>
      </g>
      <path
        d="M86 8v56l42-28zM94 21v30l22-15z"
        fill="none"
        stroke="#fff"
        strokeOpacity=".6"
        strokeWidth="4"
        strokeLinejoin="round"
      />
    </Watermark>
    <ExplorerWindow />
    <Taskbar>
      <StartButton>
        <WinFlag />
        Start
      </StartButton>
      <TaskButton $width={21} $right={7}>
        <IeIcon />
      </TaskButton>
      <TaskButton $width={32} $state="pressed">
        <FolderIcon size={17} />
      </TaskButton>
      <TaskButton $width={36}>
        <MediaIcon />
      </TaskButton>
      <TaskButton $width={34}>
        <ChromeIcon />
      </TaskButton>
      <TaskButton $width={32} $state="open">
        <EdgeIcon />
      </TaskButton>
      <Tray>
        <Line w={17} color="#555" sw={1}>
          <path d="M1 6h3l4-4v12l-4-4H1z" fill="#fff" />
          <path d="M10.500 5.500q1.500 2.500 0 5M12.500 4q2.500 4 0 8M14.500 3q3 5 0 10" />
        </Line>
        <Line w={17} color="#444" sw={1}>
          <rect x="5.500" y="4.500" width="10" height="8" fill="#fff" />
          <rect x="7.500" y="6.500" width="6" height="4" fill="#aaa" />
          <path d="M8 15h6M2 1v3h4V1M4 4v9h2" />
        </Line>
        <Line w={17} color="#555" sw={1}>
          <path d="M2.500 1v14M2.500 2h5v2h7l-2 3 0 2h-4V8h-6z" fill="#fff" />
        </Line>
        <span>11:37 AM</span>
        <svg width="16" height="14" viewBox="0 0 16 14">
          <rect x=".5" y="1.500" width="15" height="11" fill="#2f71d0" stroke="#294a7c" />
          <path d="M1 2h14v4Q8 5 1 9z" fill="#5f9ae6" />
          <path d="M1 12h14" stroke="#1b3050" />
        </svg>
      </Tray>
    </Taskbar>
  </Desktop>
);

export default App;
